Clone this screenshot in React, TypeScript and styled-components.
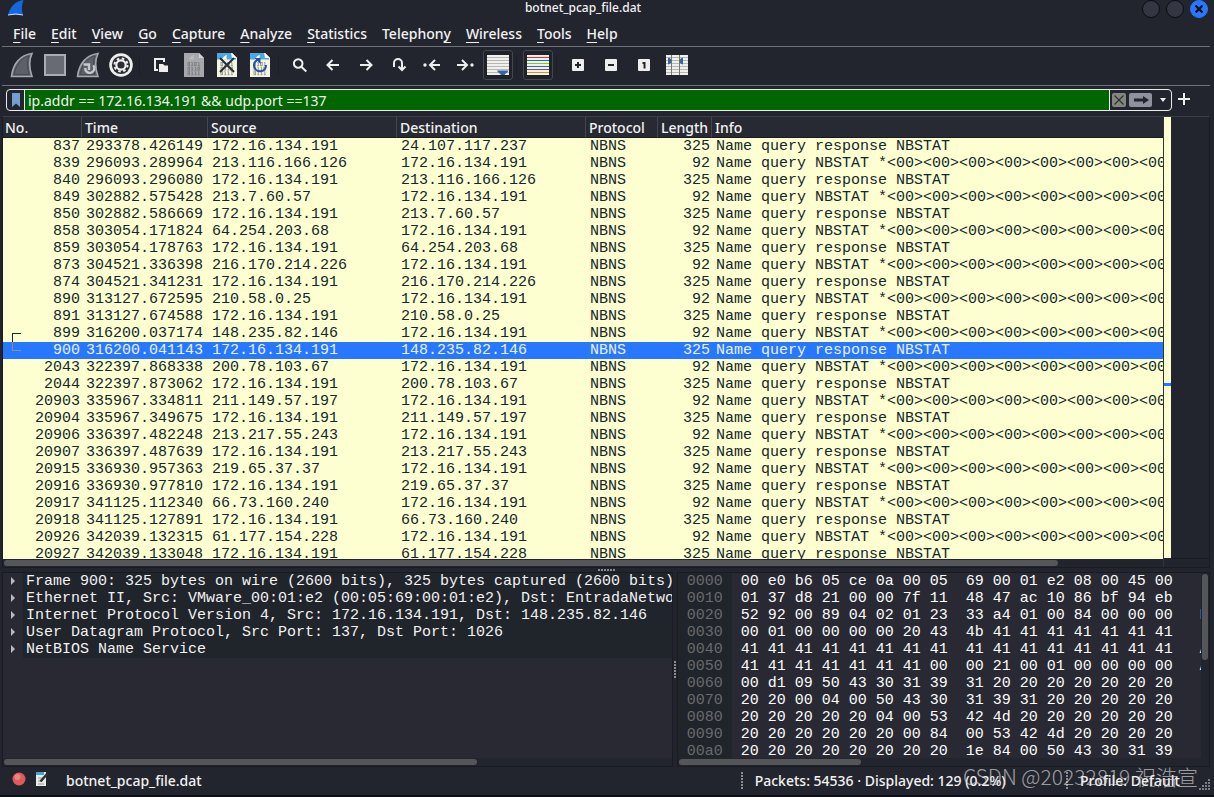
import React from "react";
import styled, { createGlobalStyle } from "styled-components";

const c = {
  window: "#23252e",
  base: "#282933",
  alt: "#20242b",
  line: "#6f7178",
  edge: "#191b22",
  text: "#f2f2f2",
  row: "#feffd0",
  rowText: "#12272e",
  select: "#2777ff",
  thumb: "#55565a",
};
const mono = `"Liberation Mono", monospace`;

const GlobalStyle = createGlobalStyle`
  *, *::before, *::after { box-sizing: border-box; }
  body { margin: 0; background: #0d0f14; }
  button, input { font: inherit; color: inherit; border: 0; padding: 0; margin: 0; background: none; }
  svg { display: block; flex: none; }
`;

const Window = styled.div`
  display: flex;
  flex-direction: column;
  height: 100vh;
  min-height: 480px;
  padding: 0 4px 2px 2px;
  background: linear-gradient(#0d0f14, #0d0f14) bottom / 100% 2px no-repeat, ${c.window};
  color: ${c.text};
  font: 500 14px/20px "Noto Sans", sans-serif;
  overflow: hidden;
`;

const TitleBar = styled.header`
  display: flex;
  align-items: flex-start;
  height: 18px;
  flex: none;
  padding-left: 6px;
`;
const Title = styled.h1`
  flex: 1;
  margin: 0;
  text-align: center;
  font-size: 12px;
  font-weight: 500;
  line-height: 16px;
`;
const WindowControls = styled.div`
  display: flex;
  gap: 6px;
  padding-right: 2px;
`;
const RoundButton = styled.button<{ $close?: boolean }>`
  display: grid;
  place-items: center;
  width: 18px;
  height: 18px;
  border-radius: 50%;
  border: 1px solid ${(p) => (p.$close ? c.select : "#0b0c10")};
  background: ${(p) => (p.$close ? c.select : "#343641")};
`;

const MenuBar = styled.nav`
  display: flex;
  align-items: center;
  gap: 15px;
  height: 29px;
  flex: none;
  padding: 3px 11px 0;
  border-bottom: 1px solid ${c.line};
`;
const MenuItem = styled.button`
  line-height: 20px;
  white-space: nowrap;
`;
const Mnemonic = styled.u`
  text-underline-offset: 3px;
  text-decoration-thickness: 1px;
  text-decoration-skip-ink: none;
`;

const ToolBar = styled.div`
  display: flex;
  align-items: center;
  gap: 3px;
  height: 39px;
  flex: none;
  padding: 0 0 2px 5px;
  border-bottom: 1px solid ${c.line};
`;
const ToolButton = styled.button<{ $on?: boolean }>`
  display: grid;
  place-items: center;
  width: 30px;
  height: 30px;
  border-radius: 3px;
  border: 1px solid ${(p) => (p.$on ? "#454750" : "transparent")};
  background: ${(p) => (p.$on ? "#20222a" : "none")};
`;
const ToolGap = styled.span`
  width: 4px;
  height: 20px;
  border-left: 1px solid #1e2027;
`;

const FilterBar = styled.div`
  display: flex;
  align-items: center;
  gap: 6px;
  height: 30px;
  flex: none;
  padding: 0 20px 2px 4px;
`;
const FilterBox = styled.div`
  display: flex;
  align-items: stretch;
  flex: 1;
  height: 22px;
  border: 1px solid #ececec;
  border-radius: 4px;
  overflow: hidden;
`;
const FilterMark = styled.button`
  display: grid;
  place-items: center;
  width: 18px;
  border-right: 1px solid #ececec;
`;
const FilterInput = styled.input`
  flex: 1;
  min-width: 0;
  padding: 1px 3px 0;
  background: #006600;
  font-weight: 400;
  outline: 0;
`;
const FilterActions = styled.div`
  display: flex;
  align-items: center;
  gap: 3px;
  width: 62px;
  padding-left: 2px;
  border-left: 1px solid #ececec;
`;
const FilterAction = styled.button<{ $w: number; $fill?: string }>`
  display: grid;
  place-items: center;
  width: ${(p) => p.$w}px;
  height: 14px;
  border-radius: 2px;
  background: ${(p) => p.$fill ?? "none"};
`;
const AddButton = styled.button`
  display: grid;
  place-items: center;
  width: 12px;
  height: 22px;
  padding-bottom: 2px;
`;

const Panes = styled.main`
  display: flex;
  flex-direction: column;
  flex: 1;
  min-height: 0;
`;
const PacketPane = styled.section`
  display: flex;
  flex: 451 1 0;
  min-height: 0;
  border: 1px solid ${c.edge};
  border-top-color: #3b3d46;
`;
const PacketColumn = styled.div`
  display: flex;
  flex-direction: column;
  flex: 1;
  min-width: 0;
  border-right: 1px solid #33343a;
`;
const PacketScroller = styled.div`
  flex: 1;
  min-height: 0;
  overflow: hidden;
  background: ${c.row};
`;
const PacketTable = styled.table`
  width: 100%;
  table-layout: fixed;
  border-collapse: separate;
  border-spacing: 0;
`;
const HeadCell = styled.th`
  height: 21px;
  padding: 2px 0 0 3px;
  overflow: hidden;
  text-align: left;
  font-weight: 500;
  line-height: 18px;
  white-space: nowrap;
  background: #272a33;
  border-right: 1px solid #44464e;
  border-bottom: 1px solid ${c.edge};
  &:first-child { padding-left: 2px; }
  &:last-child { border-right: 0; }
`;
const PacketRow = styled.tr<{ $selected: boolean }>`
  font: 15px/17px ${mono};
  color: ${(p) => (p.$selected ? "#e9f1ff" : c.rowText)};
  background: ${(p) => (p.$selected ? c.select : c.row)};
`;
const Cell = styled.td<{ $right?: boolean }>`
  position: relative;
  height: 17px;
  padding: 0 ${(p) => (p.$right ? 2 : 0)}px 0 4px;
  overflow: hidden;
  white-space: pre;
  text-align: ${(p) => (p.$right ? "right" : "left")};
`;
const Related = styled.span<{ $end: boolean }>`
  position: absolute;
  left: 9px;
  width: 9px;
  height: 9px;
  ${(p) => (p.$end ? "top: 0" : "bottom: 0")};
  border-left: 1px solid ${(p) => (p.$end ? "#8d8c8c" : c.rowText)};
  ${(p) => (p.$end ? "border-bottom: 1px solid #8d8c8c" : `border-top: 1px solid ${c.rowText}`)};
`;
const MiniMap = styled.div`
  position: relative;
  width: 7px;
  margin-bottom: 9px;
  background: ${c.row};
  &::after {
    content: "";
    position: absolute;
    left: 0;
    right: 0;
    bottom: 39%;
    height: 3px;
    background: ${c.select};
  }
`;
const PaneBlank = styled.div`
  width: 38px;
  margin-bottom: 8px;
  border-bottom: 1px solid ${c.edge};
`;

const ScrollTrack = styled.div<{ $vertical?: boolean }>`
  display: flex;
  flex: none;
  padding: 1px;
  ${(p) => (p.$vertical ? "width: 8px" : "height: 8px")};
  background: ${c.window};
`;
const ScrollThumb = styled.div<{ $size: number; $vertical?: boolean }>`
  ${(p) => (p.$vertical ? `width: 6px; height: ${p.$size}%` : `height: 6px; width: ${p.$size}%`)};
  border-radius: 3px;
  background: ${c.thumb};
`;

const Splitter = styled.div<{ $vertical?: boolean }>`
  display: flex;
  flex: none;
  align-items: center;
  justify-content: center;
  ${(p) => (p.$vertical ? "width: 4px" : "height: 4px")};
`;
const Grip = styled.span<{ $vertical?: boolean; $length: number }>`
  flex: none;
  width: ${(p) => (p.$vertical ? 2 : p.$length)}px;
  height: ${(p) => (p.$vertical ? p.$length : 2)}px;
  background: repeating-linear-gradient(
    ${(p) => (p.$vertical ? "180deg" : "90deg")},
    #8a8b90 0 2px,
    transparent 2px 3px
  );
`;

const LowerPanes = styled.div`
  display: flex;
  flex: 196 1 0;
  min-height: 0;
`;
const DetailPane = styled.section`
  display: flex;
  flex-direction: column;
  flex: 671 1 0;
  min-width: 0;
  border: 1px solid ${c.edge};
  background: ${c.base};
`;
const DetailTree = styled.ul`
  flex: 1;
  min-height: 0;
  margin: 0;
  padding: 0;
  overflow: hidden;
  list-style: none;
`;
const DetailRow = styled.li`
  display: flex;
  align-items: center;
  height: 17px;
  font: 15px/17px ${mono};
  white-space: pre;
`;
const Expander = styled.button`
  display: grid;
  place-items: center;
  flex: none;
  width: 20px;
  height: 17px;
`;
const DetailText = styled.span`
  flex: 1;
  min-width: 0;
  padding-left: 3px;
  overflow: hidden;
  background: ${c.alt};
`;
const BytesPane = styled.section`
  display: flex;
  flex: 533 1 0;
  min-width: 0;
  border: 1px solid ${c.edge};
  background: ${c.base};
`;
const BytesColumn = styled.div`
  display: flex;
  flex-direction: column;
  flex: 1;
  min-width: 0;
`;
const BytesView = styled.div`
  display: flex;
  flex: 1;
  min-height: 0;
  overflow: hidden;
  font: 15px/17px ${mono};
`;
const Offsets = styled.pre`
  flex: none;
  margin: 0;
  padding: 0 9px;
  font: inherit;
  color: #686a6e;
  background: ${c.alt};
`;
const Bytes = styled.pre`
  flex: 1;
  min-width: 0;
  margin: 0;
  padding-left: 9px;
  overflow: hidden;
  font: inherit;
  color: #fcfcfc;
`;

const StatusBar = styled.footer`
  position: relative;
  display: flex;
  align-items: center;
  height: 28px;
  flex: none;
  padding: 0 0 1px 10px;
`;
const StatusButton = styled.button`
  width: 16px;
  height: 18px;
  padding-bottom: 4px;
  margin-right: 7px;
`;
const StatusFile = styled.span`
  flex: 674 1 0;
  min-width: 0;
  padding-left: 8px;
`;
const StatusInfo = styled.span`
  flex: 311 1 0;
  min-width: 0;
  padding-left: 12px;
  white-space: nowrap;
`;
const ProfileButton = styled.button`
  width: 131px;
  padding-left: 12px;
  text-align: left;
`;
const SizeGrip = styled.svg`
  align-self: flex-end;
  margin-bottom: 4px;
`;
const Watermark = styled.span`
  position: absolute;
  right: 12px;
  top: -4px;
  font: 300 21px/26px "Noto Sans CJK SC", sans-serif;
  color: rgba(225, 225, 225, 0.65);
  white-space: nowrap;
  pointer-events: none;
`;

const Fin = ({ restart = false }: { restart?: boolean }) => (
  <svg width="24" height="26" viewBox="0 0 24 26">
    <path d="M1.5 24.5C3 12 10 3 22 1.5C19 8 19 16 22 24.5Z" fill="#5d6068" stroke="#a4a7ad" strokeWidth="1.6" />
    <path d="M4 22.500C6 13 11 6 18.500 4C17 10 17 16 19 22.500Z" fill="none" stroke="#484b54" />
    {restart && (
      <path d="M17.300 13.300A4.600 4.600 0 1 1 9.200 16M7.500 12.500h5.500v5.500" fill="none" stroke="#c6c8cd" strokeWidth="2.400" />
    )}
  </svg>
);
const Stop = () => (
  <svg width="22" height="22" viewBox="0 0 22 22">
    <rect x="1" y="1" width="20" height="20" fill="#686b73" stroke="#a9acb2" strokeWidth="2" />
  </svg>
);
const Gear = () => (
  <svg width="24" height="24" viewBox="0 0 24 24">
    <circle cx="12" cy="12" r="11.800" fill="#eee" />
    <circle cx="12" cy="12" r="9.100" fill="#2b2d33" />
    <circle cx="12" cy="12" r="6.500" fill="none" stroke="#eee" strokeWidth="2" strokeDasharray="2.550 2.550" />
    <circle cx="12" cy="12" r="4.700" fill="none" stroke="#eee" strokeWidth="2.200" />
  </svg>
);
const OpenIcon = () => (
  <svg width="16" height="16" viewBox="0 0 16 16">
    <path d="M5 13H2V2h9v3" fill="none" stroke="#eee" strokeWidth="2" />
    <path d="M6 7h4l1.500 1.500H15V15H6Z" fill="#eee" />
  </svg>
);
type FileKind = "save" | "close" | "reload";
const FileIcon = ({ kind }: { kind: FileKind }) => {
  const off = kind === "save";
  return (
    <svg width="20" height="24" viewBox="0 0 20 24">
      <path d="M0 0h15l5 5v19H0Z" fill={off ? "#a6a8ac" : "#f5f5e4"} />
      <path d="M0 0h14l1 5h4v1.500H0Z" fill={off ? "#a6a8ac" : "#4aa9e2"} />
      <path d="M5 6.500C6 4 8 2.500 10 2C9.300 3.500 9.500 5 10 6.500Z" fill={off ? "#b9bbbe" : "#fff"} />
      <path d="M15 0v5h5Z" fill={off ? "#d0d1d3" : "#fff"} />
      {["0101", "0110", "0111"].map((bits, i) => (
        <g key={bits} stroke={off ? "#7c7e83" : "#95968c"} fill="none" strokeWidth="0.900">
          {bits.split("").map((b, j) =>
            b === "1" ? (
              <path key={j} d={`M${4 + j * 3.3} ${9.5 + i * 4.6}h1v3M${4 + j * 3.3} ${12.5 + i * 4.6}h2`} />
            ) : (
              <rect key={j} x={4 + j * 3.3} y={9.5 + i * 4.6} width="1.600" height="3" />
            )
          )}
        </g>
      ))}
      {kind === "close" && <path d="M3 5L17 19M17 5L3 19" stroke="#2b2e33" strokeWidth="2" />}
      {kind === "reload" && (
        <>
          <path d="M7.500 6.800A6 6 0 1 0 16 12" fill="none" stroke="#2450a0" strokeWidth="2" />
          <path d="M4.500 5H10.500V11Z" fill="#2450a0" />
        </>
      )}
    </svg>
  );
};
const Glyph = ({ d, dot }: { d: string; dot?: number }) => (
  <svg width="18" height="16" viewBox="0 0 18 16" fill="none" stroke="#eee" strokeWidth="2">
    <path d={d} />
    {dot !== undefined && <circle cx={dot} cy="8" r="1.700" fill="#eee" stroke="none" />}
  </svg>
);
const SearchIcon = () => <Glyph d="M11.500 6.500A4.300 4.300 0 1 1 2.900 6.500A4.300 4.300 0 1 1 11.500 6.500ZM10.300 9.800L15.300 14.500" />;
const ScrollIcon = () => (
  <svg width="22" height="20" viewBox="0 0 22 20">
    <rect width="22" height="20" fill="#f0f0ec" />
    <path d="M0 2.500H22M0 5.500H22M0 8.500H22M0 11.500H22M0 14.500H22M0 17.500H22" stroke="#b6b7b1" />
    <path d="M10 15.500H21.500C20.500 18 18.500 18 17.500 20H14C13 18 11 18 10 15.500Z" fill="#3465a4" />
  </svg>
);
const ColorIcon = () => (
  <svg width="22" height="20" viewBox="0 0 22 20">
    <rect width="22" height="20" fill="#f0f0ec" />
    {["#ef2929", "#3465a4", "#73d216", "#3465a4", "#75507b", "#c4a000"].map((k, i) => (
      <path key={i} d={`M0 ${2.5 + i * 3}H22`} stroke={k} />
    ))}
  </svg>
);
const BoxIcon = ({ d }: { d: string }) => (
  <svg width="12" height="12" viewBox="0 0 12 12">
    <rect width="12" height="12" rx="1" fill="#eee" />
    <path d={d} fill="none" stroke="#23252e" strokeWidth="2" />
  </svg>
);
const ColumnsIcon = () => (
  <svg width="22" height="20" viewBox="0 0 22 20">
    <rect width="22" height="20" fill="#f0f0ec" />
    <path d="M0 2.500H22M0 5.500H22M0 8.500H22M0 11.500H22M0 14.500H22M0 17.500H22" stroke="#b6b7b1" />
    <path d="M5.500 0V20M13.500 0V20" stroke="#777973" />
    <path d="M2 2.500Q5.500 3.500 5.500 6Q5.500 8.500 2 9.500ZM17 2.500Q13.500 3.500 13.500 6Q13.500 8.500 17 9.500Z" fill="#3465a4" />
  </svg>
);

const tools: ({ label: string; icon: React.ReactNode; on?: boolean } | null)[] = [
  { label: "Start capture", icon: <Fin /> },
  { label: "Stop capture", icon: <Stop /> },
  { label: "Restart capture", icon: <Fin restart /> },
  { label: "Capture options", icon: <Gear /> },
  null,
  { label: "Open file", icon: <OpenIcon /> },
  { label: "Save file", icon: <FileIcon kind="save" /> },
  { label: "Close file", icon: <FileIcon kind="close" /> },
  { label: "Reload file", icon: <FileIcon kind="reload" /> },
  null,
  { label: "Find packet", icon: <SearchIcon /> },
  { label: "Previous packet", icon: <Glyph d="M15 8H4M8.500 3L3.500 8L8.500 13" /> },
  { label: "Next packet", icon: <Glyph d="M3 8H14M9.500 3L14.500 8L9.500 13" /> },
  { label: "Go to packet", icon: <Glyph d="M4 10V6A4 4 0 0 1 12 6V13M8.500 9.500L12 13L15.500 9.500" /> },
  { label: "First packet", icon: <Glyph d="M17 8H8M12 3L7 8L12 13" dot={2} /> },
  { label: "Last packet", icon: <Glyph d="M1 8H10M6 3L11 8L6 13" dot={16} /> },
  { label: "Auto scroll", icon: <ScrollIcon />, on: true },
  null,
  { label: "Colorize", icon: <ColorIcon />, on: true },
  null,
  { label: "Zoom in", icon: <BoxIcon d="M3 6H9M6 3V9" /> },
  { label: "Zoom out", icon: <BoxIcon d="M3 6H9" /> },
  { label: "Normal size", icon: <BoxIcon d="M4.500 4H6.500V9.500" /> },
  { label: "Resize columns", icon: <ColumnsIcon /> },
];

// The underscore marks the letter that opens the menu.
const menus = [
  "_File", "_Edit", "_View", "_Go", "_Capture", "_Analyze", "_Statistics", "Telephon_y", "_Wireless", "_Tools", "_Help",
];

const local = "172.16.134.191";
const queries: [number, string, string, boolean][] = [
  [837, "293378.426149", "24.107.117.237", true],
  [839, "296093.289964", "213.116.166.126", false],
  [840, "296093.296080", "213.116.166.126", true],
  [849, "302882.575428", "213.7.60.57", false],
  [850, "302882.586669", "213.7.60.57", true],
  [858, "303054.171824", "64.254.203.68", false],
  [859, "303054.178763", "64.254.203.68", true],
  [873, "304521.336398", "216.170.214.226", false],
  [874, "304521.341231", "216.170.214.226", true],
  [890, "313127.672595", "210.58.0.25", false],
  [891, "313127.674588", "210.58.0.25", true],
  [899, "316200.037174", "148.235.82.146", false],
  [900, "316200.041143", "148.235.82.146", true],
  [2043, "322397.868338", "200.78.103.67", false],
  [2044, "322397.873062", "200.78.103.67", true],
  [20903, "335967.334811", "211.149.57.197", false],
  [20904, "335967.349675", "211.149.57.197", true],
  [20906, "336397.482248", "213.217.55.243", false],
  [20907, "336397.487639", "213.217.55.243", true],
  [20915, "336930.957363", "219.65.37.37", false],
  [20916, "336930.977810", "219.65.37.37", true],
  [20917, "341125.112340", "66.73.160.240", false],
  [20918, "341125.127891", "66.73.160.240", true],
  [20926, "342039.132315", "61.177.154.228", false],
  [20927, "342039.133048", "61.177.154.228", true],
];

const columns: [string, number | undefined][] = [
  ["No.", 79],
  ["Time", 126],
  ["Source", 189],
  ["Destination", 189],
  ["Protocol", 72],
  ["Length", 54],
  ["Info", undefined],
];

const details = [
  "Frame 900: 325 bytes on wire (2600 bits), 325 bytes captured (2600 bits)",
  "Ethernet II, Src: VMware_00:01:e2 (00:05:69:00:01:e2), Dst: EntradaNetworks",
  "Internet Protocol Version 4, Src: 172.16.134.191, Dst: 148.235.82.146",
  "User Datagram Protocol, Src Port: 137, Dst Port: 1026",
  "NetBIOS Name Service",
];

const dump = [
  "00 e0 b6 05 ce 0a 00 05 69 00 01 e2 08 00 45 00",
  "01 37 d8 21 00 00 7f 11 48 47 ac 10 86 bf 94 eb",
  "52 92 00 89 04 02 01 23 33 a4 01 00 84 00 00 00",
  "00 01 00 00 00 00 20 43 4b 41 41 41 41 41 41 41",
  "41 41 41 41 41 41 41 41 41 41 41 41 41 41 41 41",
  "41 41 41 41 41 41 41 00 00 21 00 01 00 00 00 00",
  "00 d1 09 50 43 30 31 39 31 20 20 20 20 20 20 20",
  "20 20 00 04 00 50 43 30 31 39 31 20 20 20 20 20",
  "20 20 20 20 20 04 00 53 42 4d 20 20 20 20 20 20",
  "20 20 20 20 20 20 00 84 00 53 42 4d 20 20 20 20",
  "20 20 20 20 20 20 20 20 1e 84 00 50 43 30 31 39",
];
const toAscii = (line: string) =>
  line
    .split(" ")
    .map((b) => parseInt(b, 16))
    .map((n) => (n >= 32 && n < 127 ? String.fromCharCode(n) : "."))
    .join("");
const hexText = dump.map((l) => `${l.slice(0, 23)}  ${l.slice(24)}   ${toAscii(l)}`).join("\n");
const offsetText = dump.map((_, i) => (i * 16).toString(16).padStart(4, "0")).join("\n");

export default function App() {
  return (
    <Window>
      <GlobalStyle />
      <TitleBar>
        <svg width="16" height="16" viewBox="0 0 16 16">
          <path d="M0 15C2 7 7 1 15.500 0C13.500 5 13.500 10 15 15Z" fill="#1467dc" />
          <path d="M0 15Q8 13 15 15" fill="none" stroke="#cfe3ff" />
        </svg>
        <Title>botnet_pcap_file.dat</Title>
        <WindowControls>
          <RoundButton aria-label="Minimize" />
          <RoundButton aria-label="Maximize" />
          <RoundButton aria-label="Close" $close>
            <svg width="8" height="8" viewBox="0 0 8 8">
              <path d="M0.500 0.500L7.500 7.500M7.500 0.500L0.500 7.500" stroke="#0c0e14" strokeWidth="2.200" />
            </svg>
          </RoundButton>
        </WindowControls>
      </TitleBar>
      <MenuBar>
        {menus.map((m) => {
          const [before, after] = m.split("_");
          return (
            <MenuItem key={m}>
              {before}
              <Mnemonic>{after[0]}</Mnemonic>
              {after.slice(1)}
            </MenuItem>
          );
        })}
      </MenuBar>
      <ToolBar>
        {tools.map((t, i) =>
          t ? (
            <ToolButton key={i} aria-label={t.label} $on={t.on}>
              {t.icon}
            </ToolButton>
          ) : (
            <ToolGap key={i} />
          )
        )}
      </ToolBar>
      <FilterBar>
        <FilterBox>
          <FilterMark aria-label="Filter bookmarks">
            <svg width="8" height="14" viewBox="0 0 8 14">
              <path d="M0 0H8V14L4 10.500L0 14Z" fill="#729fcf" />
            </svg>
          </FilterMark>
          <FilterInput aria-label="Display filter" defaultValue="ip.addr == 172.16.134.191 && udp.port ==137" />
          <FilterActions>
            <FilterAction aria-label="Clear filter" $w={14} $fill="#85877f">
              <svg width="10" height="10" viewBox="0 0 10 10">
                <path d="M0.500 0.500L9.500 9.500M9.500 0.500L0.500 9.500" stroke="#2e3436" strokeWidth="1.300" />
              </svg>
            </FilterAction>
            <FilterAction aria-label="Apply filter" $w={24} $fill="#8f929d">
              <svg width="16" height="8" viewBox="0 0 16 8">
                <path d="M1 2.500H10V0L16 4L10 8V5.500H1Z" fill="#23252e" />
              </svg>
            </FilterAction>
            <FilterAction aria-label="Recent filters" $w={16}>
              <svg width="6" height="4" viewBox="0 0 6 4">
                <path d="M0 0H6L3 4Z" fill="#eee" />
              </svg>
            </FilterAction>
          </FilterActions>
        </FilterBox>
        <AddButton aria-label="Add filter button">
          <svg width="12" height="12" viewBox="0 0 12 12">
            <path d="M0 6H12M6 0V12" stroke="#eee" strokeWidth="2" />
          </svg>
        </AddButton>
      </FilterBar>
      <Panes>
        <PacketPane>
          <PacketColumn>
            <PacketScroller>
              <PacketTable>
                <colgroup>
                  {columns.map(([n, w]) => (
                    <col key={n} width={w} />
                  ))}
                </colgroup>
                <thead>
                  <tr>
                    {columns.map(([n]) => (
                      <HeadCell key={n}>{n}</HeadCell>
                    ))}
                  </tr>
                </thead>
                <tbody>
                  {queries.map(([no, time, host, reply]) => (
                    <PacketRow key={no} $selected={no === 900}>
                      <Cell $right>
                        {(no === 899 || no === 900) && <Related $end={no === 900} />}
                        {no}
                      </Cell>
                      <Cell>{time}</Cell>
                      <Cell>{reply ? local : host}</Cell>
                      <Cell>{reply ? host : local}</Cell>
                      <Cell>NBNS</Cell>
                      <Cell $right>{reply ? 325 : 92}</Cell>
                      <Cell>{reply ? "Name query response NBSTAT" : "Name query NBSTAT *" + "<00>".repeat(15)}</Cell>
                    </PacketRow>
                  ))}
                </tbody>
              </PacketTable>
            </PacketScroller>
            <ScrollTrack>
              <ScrollThumb $size={91} />
            </ScrollTrack>
          </PacketColumn>
          <MiniMap />
          <PaneBlank />
        </PacketPane>
        <Splitter>
          <Grip $length={17} />
        </Splitter>
        <LowerPanes>
          <DetailPane>
            <DetailTree>
              {details.map((d) => (
                <DetailRow key={d}>
                  <Expander aria-label="Expand">
                    <svg width="4" height="8" viewBox="0 0 4 8">
                      <path d="M0 0L4 4L0 8Z" fill="#b9babd" />
                    </svg>
                  </Expander>
                  <DetailText>{d}</DetailText>
                </DetailRow>
              ))}
            </DetailTree>
            <ScrollTrack>
              <ScrollThumb $size={71} />
            </ScrollTrack>
          </DetailPane>
          <Splitter $vertical>
            <Grip $vertical $length={17} />
          </Splitter>
          <BytesPane>
            <BytesColumn>
              <BytesView>
                <Offsets>{offsetText}</Offsets>
                <Bytes>{hexText}</Bytes>
              </BytesView>
              <ScrollTrack>
                <ScrollThumb $size={35} />
              </ScrollTrack>
            </BytesColumn>
            <ScrollTrack $vertical>
              <ScrollThumb $vertical $size={45} />
            </ScrollTrack>
          </BytesPane>
        </LowerPanes>
      </Panes>
      <StatusBar>
        <StatusButton aria-label="Expert information">
          <svg width="14" height="14" viewBox="0 0 14 14">
            <circle cx="7" cy="7" r="6.500" fill="#e05a5a" />
            <circle cx="5.500" cy="5" r="3" fill="#ea8580" />
          </svg>
        </StatusButton>
        <StatusButton aria-label="Capture comment">
          <svg width="14" height="14" viewBox="0 0 14 14">
            <path d="M1 0H11V14H1Z" fill="#e9ebe6" />
            <path d="M1 0H9V3H1Z" fill="#3fa3dc" />
            <path d="M3 6H7M3 9H6M3 12H9" stroke="#9a9c98" />
            <path d="M5.500 9.500L12.500 1.500" stroke="#2c2e33" strokeWidth="2.500" />
          </svg>
        </StatusButton>
        <StatusFile>botnet_pcap_file.dat</StatusFile>
        <Grip $vertical $length={17} />
        <StatusInfo>Packets: 54536 · Displayed: 129 (0.2%)</StatusInfo>
        <Grip $vertical $length={17} />
        <ProfileButton>Profile: Default</ProfileButton>
        <SizeGrip width="11" height="11" viewBox="0 0 11 11">
          <path d="M9 0h2v2h-2zM6 3h2v2h-2zM9 3h2v2h-2zM3 6h2v2h-2zM6 6h2v2h-2zM9 6h2v2h-2zM0 9h2v2h-2zM3 9h2v2h-2zM6 9h2v2h-2zM9 9h2v2h-2z" fill="#7b7d83" />
        </SizeGrip>
        <Watermark>CSDN @20232819 祝浩宣</Watermark>
      </StatusBar>
    </Window>
  );
}
